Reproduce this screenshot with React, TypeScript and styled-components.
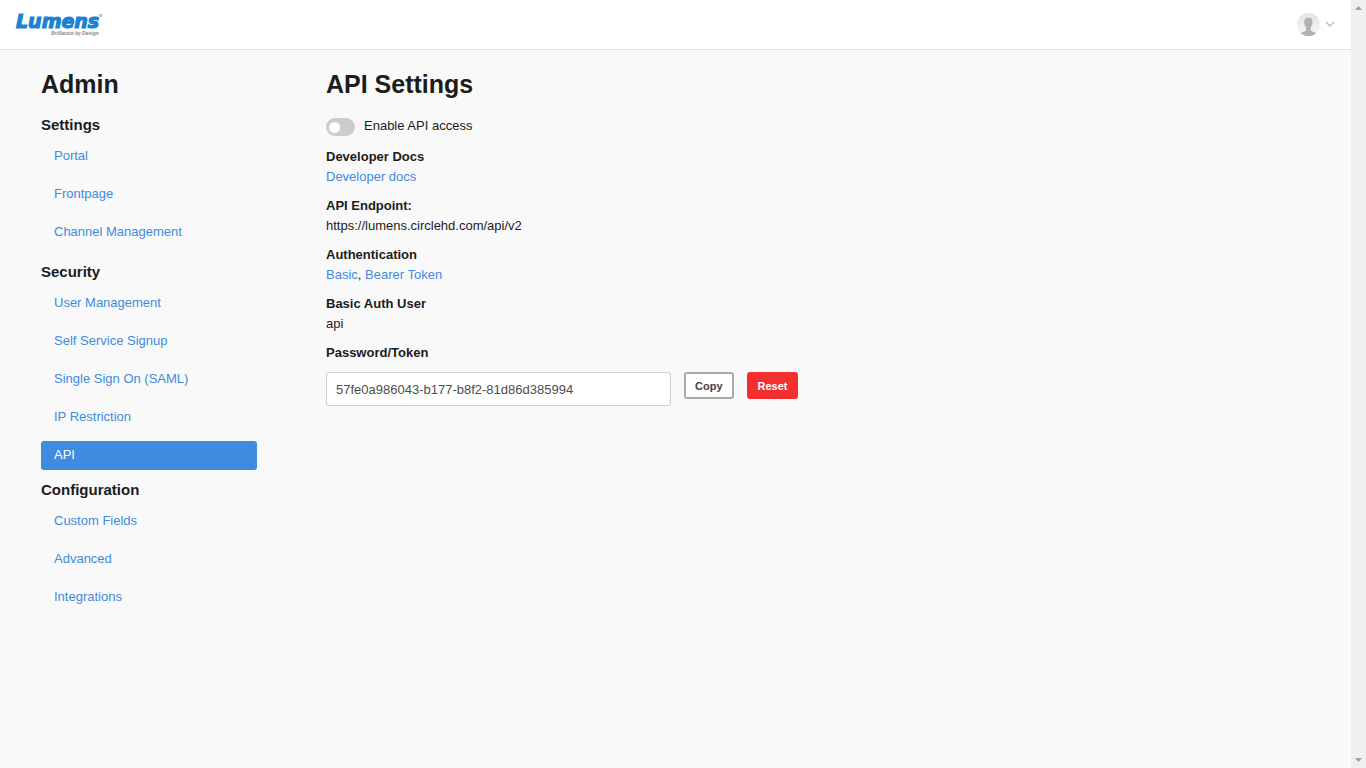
import React from "react";
import styled, { createGlobalStyle } from "styled-components";

const GlobalStyle = createGlobalStyle`
  * { box-sizing: border-box; }
  body {
    margin: 0;
    background: #f9f9f9;
    color: #1b1c1d;
    font-family: "Liberation Sans", Arial, sans-serif;
    font-size: 13px;
    line-height: 20px;
  }
`;

const Frame = styled.div`
  display: flex;
  min-height: 100vh;
`;

const Page = styled.div`
  flex: 1;
  min-width: 0;
`;

const ScrollTrack = styled.div`
  display: flex;
  flex-direction: column;
  justify-content: space-between;
  flex: 0 0 15px;
  padding: 6px 4px;
  background: #f0f0f0;

  svg { display: block; }
`;

const Header = styled.header`
  display: flex;
  align-items: center;
  justify-content: space-between;
  height: 50px;
  padding: 0 16px 0 15px;
  background: #fff;
  border-bottom: 1px solid #e2e2e2;
`;

const LogoLink = styled.a`
  display: block;

  svg { display: block; }
`;

const UserButton = styled.button`
  display: flex;
  align-items: center;
  gap: 5px;
  padding: 0;
  border: 0;
  background: none;
  cursor: pointer;
`;

const Body = styled.div`
  display: grid;
  grid-template-columns: 216px minmax(0, 1fr);
  column-gap: 69px;
  padding: 18px 41px;
`;

const Title = styled.h1`
  margin: 0;
  font-size: 25px;
  line-height: 32px;
`;

const NavGroup = styled.section<{ $gap: number }>`
  margin-top: ${(p) => p.$gap}px;
`;

const NavHeading = styled.h2`
  margin: 0 0 8px;
  font-size: 15px;
  line-height: 18px;
`;

const NavList = styled.ul`
  display: flex;
  flex-direction: column;
  gap: 9px;
  margin: 0;
  padding: 0;
  list-style: none;
`;

const NavLink = styled.a<{ $active: boolean }>`
  display: block;
  height: 29px;
  padding: 0 13px;
  border-radius: 3px;
  line-height: 28px;
  text-decoration: none;
  color: ${(p) => (p.$active ? "#fff" : "#3f8bde")};
  background: ${(p) => (p.$active ? "#3f8bde" : "transparent")};
`;

const ToggleLabel = styled.label`
  display: flex;
  gap: 9px;
  height: 18px;
  margin: 18px 0 11px;
  line-height: 16px;
`;

const Toggle = styled.input`
  appearance: none;
  display: flex;
  align-items: center;
  width: 29px;
  height: 18px;
  margin: 0;
  padding: 0 3px;
  border-radius: 9px;
  background: #ccc;
  cursor: pointer;

  &::before {
    content: "";
    width: 11px;
    height: 11px;
    border-radius: 50%;
    background: #fff;
  }
  &:checked {
    justify-content: flex-end;
    background: #3f8bde;
  }
`;

const Details = styled.dl`
  display: grid;
  gap: 9px;
  margin: 0 0 9px;
`;

const Term = styled.dt`
  font-weight: bold;
`;

const Value = styled.dd`
  margin: 0;
`;

const TextLink = styled.a`
  color: #3f8bde;
  text-decoration: none;
`;

const FieldLabel = styled.label`
  display: block;
  margin-bottom: 9px;
  font-weight: bold;
`;

const TokenRow = styled.div`
  display: flex;
  align-items: flex-start;
  gap: 13px;
`;

const TokenInput = styled.input`
  flex: 0 1 345px;
  min-width: 0;
  height: 34px;
  padding: 0 9px;
  border: 1px solid #ccc;
  border-radius: 3px;
  background: #fff;
  color: #4d4d4d;
  font: inherit;
`;

const Button = styled.button<{ $danger?: boolean }>`
  height: 27px;
  padding: 0 9px;
  border: 2px solid ${(p) => (p.$danger ? "#f42f2f" : "#aaa")};
  border-radius: 3px;
  background: ${(p) => (p.$danger ? "#f42f2f" : "#fff")};
  color: ${(p) => (p.$danger ? "#fff" : "#444")};
  font: bold 11px/20px "Liberation Sans", Arial, sans-serif;
  cursor: pointer;
`;

const groups = [
  { title: "Settings", gap: 16, items: ["Portal", "Frontpage", "Channel Management"] },
  {
    title: "Security",
    gap: 16,
    items: ["User Management", "Self Service Signup", "Single Sign On (SAML)", "IP Restriction", "API"],
  },
  { title: "Configuration", gap: 11, items: ["Custom Fields", "Advanced", "Integrations"] },
];

function Logo() {
  return (
    <svg width="90" height="26" viewBox="0 0 90 26" overflow="visible" role="img" aria-label="Lumens">
      <text x="1" y="16" fontFamily="DejaVu Sans" fontSize="19" fontWeight="bold" fontStyle="italic" fill="#1a82d2" stroke="#1a82d2" strokeWidth="1.2">
        Lumens
      </text>
      <text x="83" y="5" fontFamily="Liberation Sans" fontSize="3" fill="#1a82d2">TM</text>
      <text x="36" y="23" fontFamily="Liberation Sans" fontSize="5" fontWeight="bold" fontStyle="italic" fill="#888">
        Brilliance by Design
      </text>
    </svg>
  );
}

function Avatar() {
  return (
    <svg width="23" height="23" viewBox="0 0 23 23" aria-hidden="true">
      <defs>
        <linearGradient id="halo" x1="0" y1="0" x2="0" y2="1">
          <stop offset="0" stopColor="#e4e4e4" />
          <stop offset="1" stopColor="#f7f7f7" />
        </linearGradient>
        <clipPath id="disc"><circle cx="11.5" cy="11.5" r="11.5" /></clipPath>
      </defs>
      <g clipPath="url(#disc)">
        <rect width="23" height="23" fill="url(#halo)" />
        <path
          d="M11.3 4.5c2.8 0 4.3 1.900 4.200 4.600 0 2.200-.7 4.100-1.800 5.200v3c.3 1.300 4.400 1.900 6 3.200V23H3v-2.500c1.600-1.300 5.700-1.900 6-3.200v-3C7.800 13.200 7.100 11.300 7.100 9.100 7 6.400 8.500 4.500 11.300 4.500z"
          fill="#b2b2b2"
        />
      </g>
    </svg>
  );
}

export default function App() {
  return (
    <Frame>
      <GlobalStyle />
      <Page>
        <Header>
          <LogoLink href="#"><Logo /></LogoLink>
          <UserButton type="button" aria-label="Account menu">
            <Avatar />
            <svg width="10" height="7" viewBox="0 0 10 7" fill="none" stroke="#bbb" strokeWidth="1.4" aria-hidden="true">
              <path d="M1 1l4 4 4-4" />
            </svg>
          </UserButton>
        </Header>
        <Body>
          <nav aria-label="Admin">
            <Title>Admin</Title>
            {groups.map((group) => (
              <NavGroup key={group.title} $gap={group.gap}>
                <NavHeading>{group.title}</NavHeading>
                <NavList>
                  {group.items.map((item) => (
                    <li key={item}>
                      <NavLink href="#" $active={item === "API"} aria-current={item === "API" ? "page" : undefined}>
                        {item}
                      </NavLink>
                    </li>
                  ))}
                </NavList>
              </NavGroup>
            ))}
          </nav>
          <main>
            <Title>API Settings</Title>
            <ToggleLabel>
              <Toggle type="checkbox" role="switch" />
              Enable API access
            </ToggleLabel>
            <Details>
              <div>
                <Term>Developer Docs</Term>
                <Value><TextLink href="#">Developer docs</TextLink></Value>
              </div>
              <div>
                <Term>API Endpoint:</Term>
                <Value>https://lumens.circlehd.com/api/v2</Value>
              </div>
              <div>
                <Term>Authentication</Term>
                <Value><TextLink href="#">Basic</TextLink>, <TextLink href="#">Bearer Token</TextLink></Value>
              </div>
              <div>
                <Term>Basic Auth User</Term>
                <Value>api</Value>
              </div>
            </Details>
            <FieldLabel htmlFor="token">Password/Token</FieldLabel>
            <TokenRow>
              <TokenInput id="token" type="text" readOnly value="57fe0a986043-b177-b8f2-81d86d385994" />
              <Button type="button">Copy</Button>
              <Button type="button" $danger>Reset</Button>
            </TokenRow>
          </main>
        </Body>
      </Page>
      <ScrollTrack aria-hidden="true">
        <svg width="7" height="4" viewBox="0 0 7 4"><path d="M0 4l3.5-4L7 4z" fill="#a0a0a0" /></svg>
        <svg width="7" height="4" viewBox="0 0 7 4"><path d="M0 0l3.5 4L7 0z" fill="#a0a0a0" /></svg>
      </ScrollTrack>
    </Frame>
  );
}
